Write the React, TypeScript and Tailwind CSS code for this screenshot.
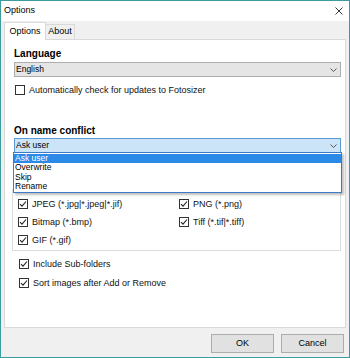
import React from 'react';

const font = "font-['Liberation_Sans',Arial,sans-serif]";

const CheckBox: React.FC<{ checked?: boolean; label: string }> = ({ checked = false, label }) => (
  <div className="flex h-[12px] items-center">
    <div className="flex h-[10px] w-[10px] shrink-0 items-center justify-center border border-[#333333] bg-white">
      {checked && (
        <svg width="8" height="8" viewBox="0 0 8 8">
          <path d="M1 4.2 L3 6.2 L7 1.5" fill="none" stroke="#222222" strokeWidth="1.1" />
        </svg>
      )}
    </div>
    <span className="ml-[4px] whitespace-nowrap text-[9px] leading-[12px] text-[#111111]">{label}</span>
  </div>
);

const Chevron: React.FC = () => (
  <svg width="7" height="4" viewBox="0 0 7 4" className="mr-[3px]">
    <path d="M0.5 0.5 L3.5 3.5 L6.5 0.5" fill="none" stroke="#555555" strokeWidth="1" />
  </svg>
);

const App: React.FC = () => {
  const conflictOptions = ['Ask user', 'Overwrite', 'Skip', 'Rename'];

  return (
    <div className={`${font} flex h-[358px] w-[350px] flex-col overflow-hidden border border-[#3c9ca0] bg-[#f0f0f0]`}>
      {/* title bar */}
      <div className="flex h-[20px] items-center justify-between bg-white pl-[3px] pr-[6px]">
        <span className="text-[9px] text-black">Options</span>
        <svg width="8" height="8" viewBox="0 0 8 8">
          <path d="M0.5 0.5 L7.5 7.5 M7.5 0.5 L0.5 7.5" stroke="#222222" strokeWidth="0.9" />
        </svg>
      </div>

      {/* tabs */}
      <div className="flex h-[18px] items-end pl-[3px]">
        <div className="relative z-10 -mb-px flex h-[18px] w-[42px] items-center justify-center border border-b-0 border-[#d9d9d9] bg-white">
          <span className="text-[9px] text-black">Options</span>
        </div>
        <div className="flex h-[15px] w-[29px] items-center justify-center border border-b-0 border-l-0 border-[#d9d9d9] bg-[#f0f0f0]">
          <span className="text-[9px] text-black">About</span>
        </div>
      </div>

      {/* panel */}
      <div className="mx-[3px] flex flex-1 flex-col border border-[#d9d9d9] bg-white pl-[9px] pr-[4px] pt-[8px]">
        <div className="h-[12px] text-[10px] font-bold leading-[12px] text-black">Language</div>
        <div className="mt-[2px] flex h-[15px] items-center justify-between border border-[#adadad] bg-[#e5e5e5] pl-[1px]">
          <span className="text-[8.5px] text-black">English</span>
          <Chevron />
        </div>
        <div className="mt-[7px] ml-[1px]">
          <CheckBox label="Automatically check for updates to Fotosizer" />
        </div>

        <div className="mt-[29px] h-[12px] text-[10px] font-bold leading-[12px] text-black">On name conflict</div>
        <div className="relative mt-[1px]">
          <div className="flex h-[15px] items-center justify-between border border-[#5b9bd5] bg-[#cce4f7] pl-[1px]">
            <span className="text-[8.5px] text-black">Ask user</span>
            <Chevron />
          </div>
          {/* open dropdown list */}
          <div className="absolute left-[-1px] right-[-1px] top-[14px] z-20 flex h-[41px] flex-col border border-[#3d7bc4] bg-white py-[1px] shadow-[2px_2px_2px_rgba(0,0,0,0.25)]">
            {conflictOptions.map((opt, i) => (
              <div
                key={opt}
                className={`flex h-[9.75px] items-center pl-[1px] text-[8.5px] leading-[9px] ${
                  i === 0 ? 'bg-[#2b8ae8] text-white' : 'text-black'
                }`}
              >
                {opt}
              </div>
            ))}
          </div>
        </div>

        {/* file types group */}
        <div className="ml-[-2px] mt-[36px] border border-[#dcdcdc] pb-[4px] pl-[5px] pt-[8px]">
          <div className="grid grid-cols-[161px_1fr] gap-y-[6px]">
            <CheckBox checked label="JPEG (*.jpg|*.jpeg|*.jif)" />
            <CheckBox checked label="PNG (*.png)" />
            <CheckBox checked label="Bitmap (*.bmp)" />
            <CheckBox checked label="Tiff (*.tif|*.tiff)" />
            <CheckBox checked label="GIF (*.gif)" />
          </div>
        </div>

        <div className="ml-[5px] mt-[7px] flex flex-col gap-[7px]">
          <CheckBox checked label="Include Sub-folders" />
          <CheckBox checked label="Sort images after Add or Remove" />
        </div>
      </div>

      {/* buttons */}
      <div className="flex justify-end gap-[7px] pb-[4px] pr-[5px] pt-[6px]">
        <button className="h-[19px] w-[63px] border border-[#adadad] bg-[#e1e1e1] text-[9px] text-black">OK</button>
        <button className="h-[19px] w-[63px] border border-[#adadad] bg-[#e1e1e1] text-[9px] text-black">Cancel</button>
      </div>
    </div>
  );
};

export default App;
